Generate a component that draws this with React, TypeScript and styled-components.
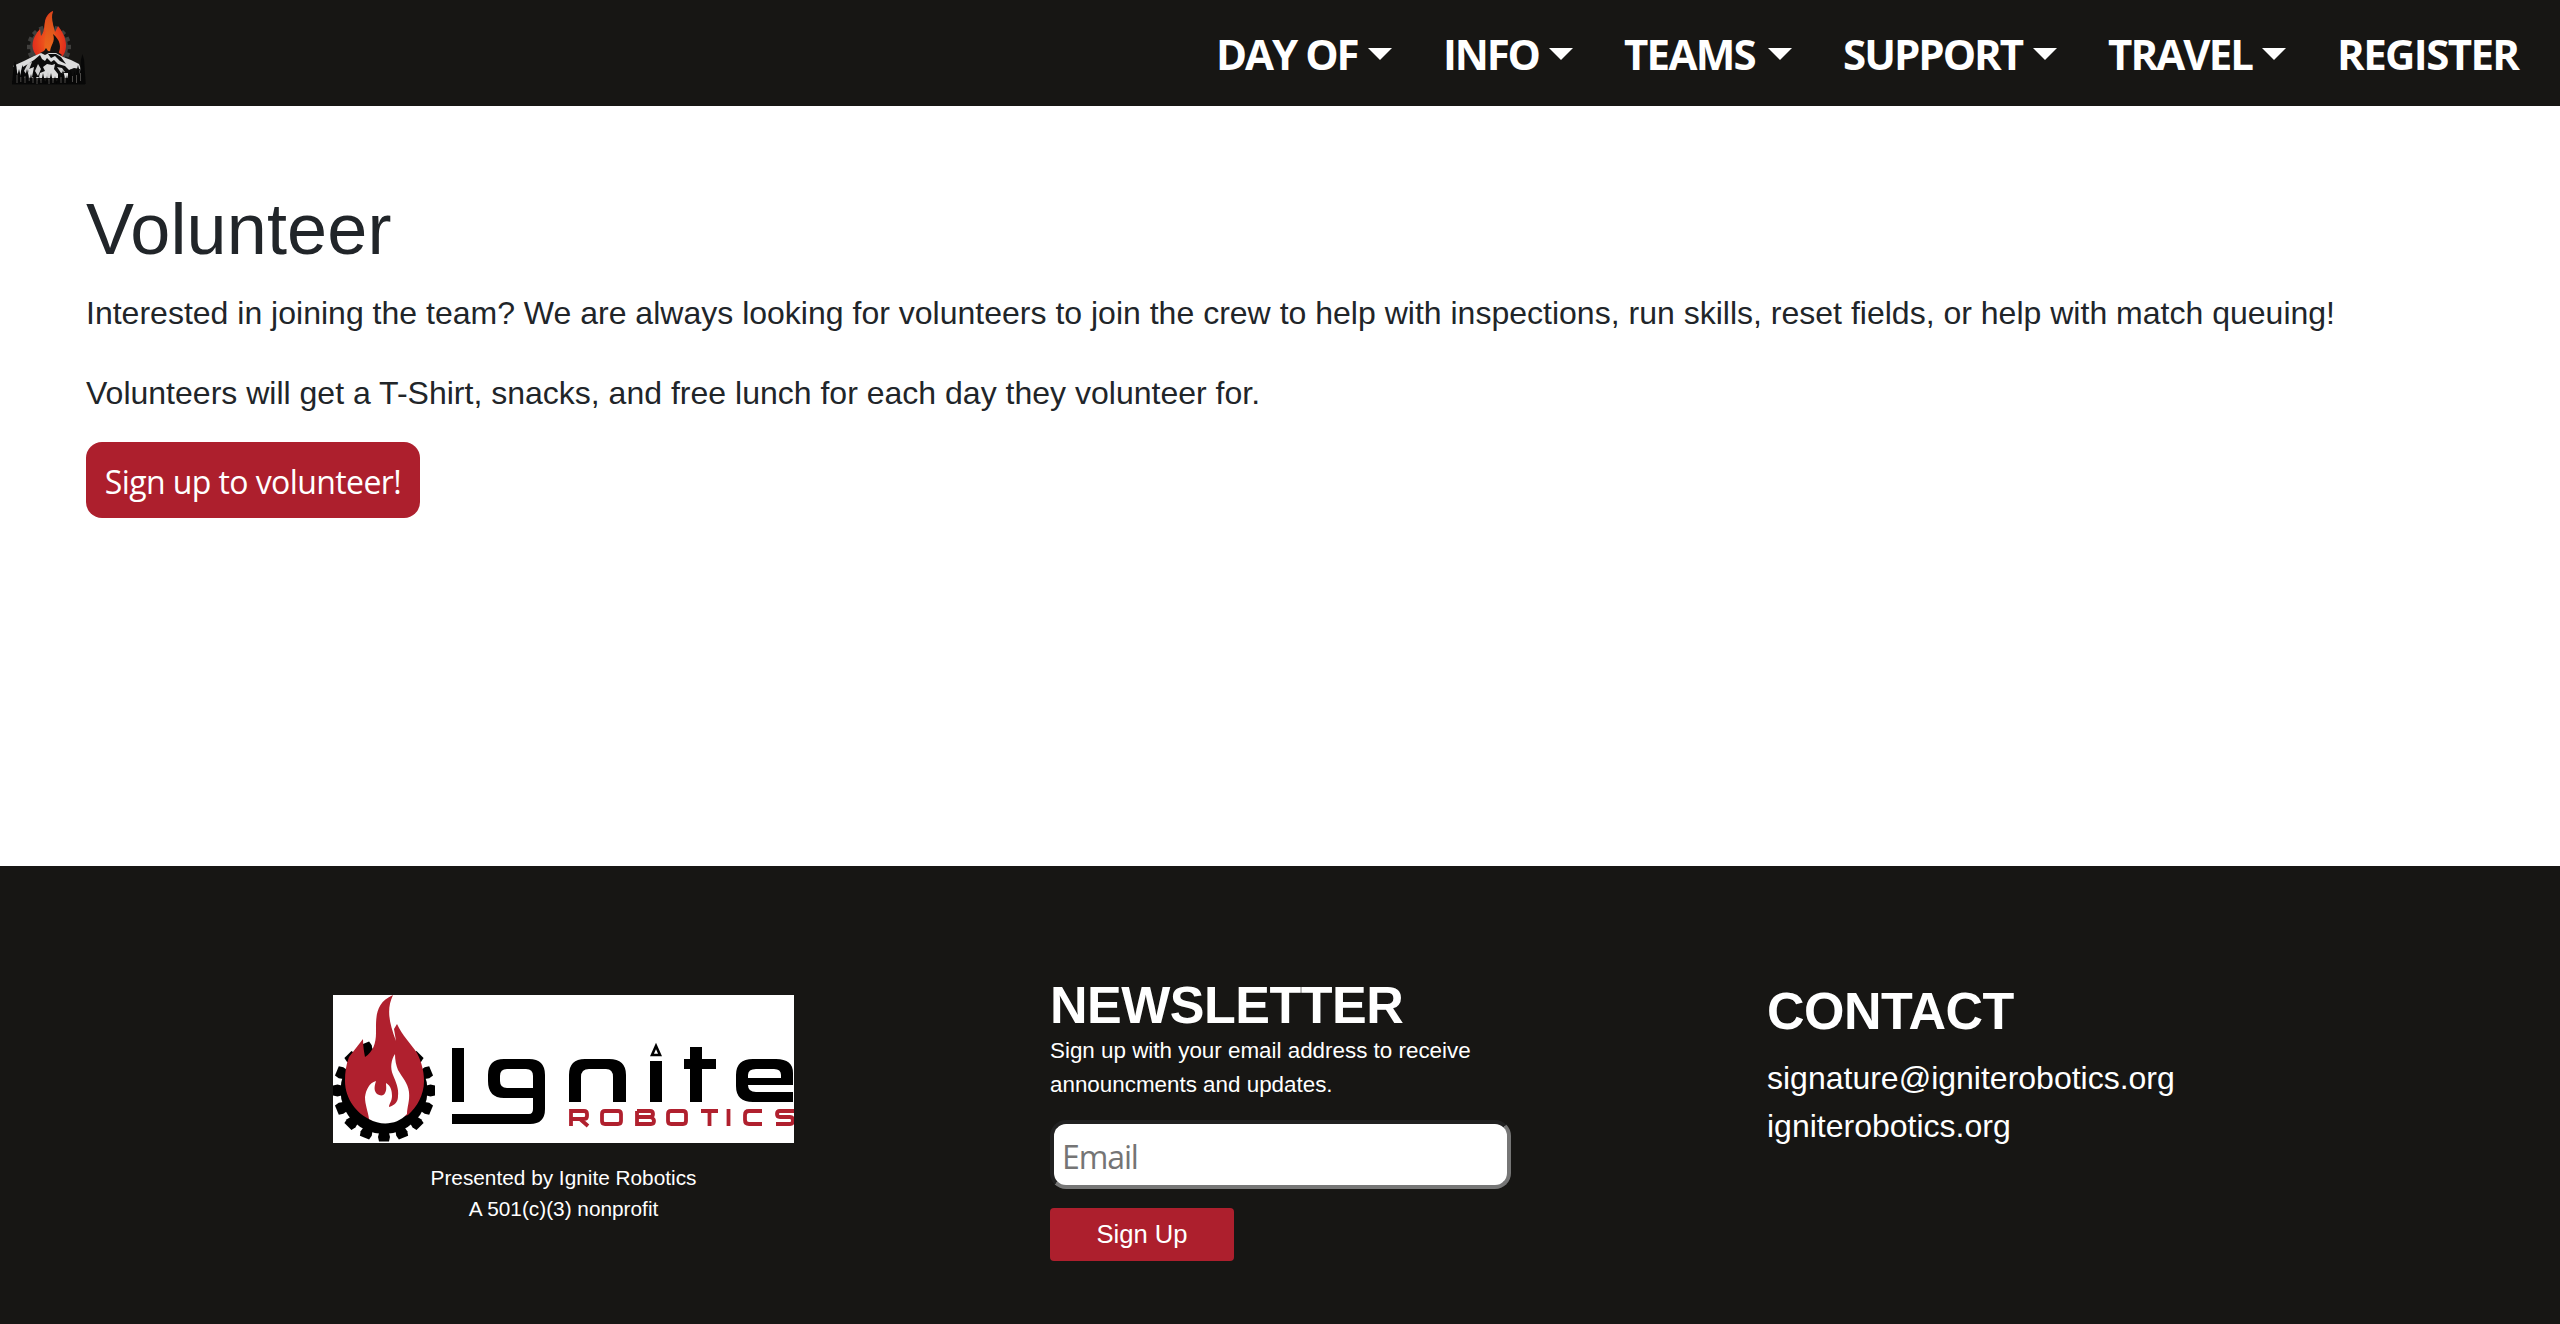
import React from "react";
import styled, { createGlobalStyle } from "styled-components";

const sans = `"Liberation Sans", Arial, sans-serif`;
const ui = `"Open Sans", "Noto Sans", sans-serif`;

const GlobalStyle = createGlobalStyle`
  *, *::before, *::after { box-sizing: border-box; }
  body { margin: 0; background: #fff; color: #212529; font-family: ${sans}; }
  h1, h2, p { margin: 0; }
`;

const Page = styled.div`
  display: flex;
  flex-direction: column;
  height: 1324px;
  overflow: hidden;
`;

const Header = styled.header`
  display: flex;
  justify-content: space-between;
  height: 106px;
  flex: none;
  background: #171614;
  padding: 0 40px 0 12px;
`;

const Brand = styled.a`
  display: block;
  width: 74px;
  padding-top: 11px;
  svg { display: block; }
`;

const Nav = styled.nav`
  display: flex;
  align-items: center;
`;

const NavItem = styled.a<{ $w: number; $ls: number }>`
  display: flex;
  align-items: center;
  width: ${(p) => p.$w}px;
  color: #fff;
  font: 700 42px/60px ${ui};
  letter-spacing: ${(p) => p.$ls}px;
  white-space: nowrap;
  padding-top: 2px;
`;

const Label = styled.span<{ $w: number }>`
  width: ${(p) => p.$w}px;
`;

const Caret = styled.span`
  border-top: 12px solid #fff;
  border-left: 12px solid transparent;
  border-right: 12px solid transparent;
`;

const Main = styled.main`
  height: 760px;
  flex: none;
  padding: 77px 86px 0;
`;

const Title = styled.h1`
  font-size: 72px;
  font-weight: 400;
  line-height: 92px;
  letter-spacing: 0.15px;
`;

const Lead = styled.p`
  font-size: 32px;
  line-height: 40px;
  padding-top: 18px;
  height: 167px;
  letter-spacing: 0.008px;
  white-space: nowrap;
`;

const Volunteer = styled.a`
  display: flex;
  justify-content: center;
  width: 334px;
  height: 76px;
  border-radius: 16px;
  background: #ad1f2d;
  color: #fff;
  font: 400 32px/80px ${ui};
  letter-spacing: -0.6px;
  white-space: nowrap;
`;

const Footer = styled.footer`
  display: flex;
  flex: 1;
  background: #171614;
  color: #fff;
  padding-left: 333px;
`;

const Sponsor = styled.section`
  width: 461px;
  margin-right: 256px;
  padding-top: 129px;
  text-align: center;
  font-size: 20.8px;
  line-height: 31px;
  svg { display: block; margin-bottom: 19px; }
`;

const Newsletter = styled.section`
  width: 462px;
  margin-right: 255px;
  padding-top: 109px;
`;

const Heading = styled.h2`
  font-size: 52px;
  font-weight: 700;
  line-height: 60px;
  letter-spacing: -0.5px;
  white-space: nowrap;
`;

const Blurb = styled.p`
  font-size: 22.4px;
  line-height: 34px;
  height: 86px;
  margin-top: -1px;
`;

const Email = styled.input`
  display: block;
  width: 461px;
  height: 69px;
  border: 4px solid;
  border-color: #212121 #767676 #767676 #212121;
  border-radius: 16px;
  background: #fff;
  padding: 4px 8px 0;
  font: 400 32px ${ui};
  letter-spacing: -1.1px;
  &::placeholder { color: #757575; opacity: 1; }
`;

const SignUp = styled.button`
  display: block;
  width: 184px;
  height: 53px;
  margin-top: 19px;
  padding: 0;
  border: 0;
  border-radius: 4px;
  background: #ad1f2d;
  color: #fff;
  font: 400 25.6px ${sans};
`;

const Contact = styled.section`
  padding-top: 115px;
`;

const ContactLink = styled.a`
  display: block;
  font-size: 32px;
  line-height: 48px;
`;

const ContactLinks = styled.div`
  padding-top: 13px;
`;

const items = [
  { text: "DAY OF", w: 227, label: 152, ls: -2, caret: true },
  { text: "INFO", w: 181, label: 106, ls: -2.2, caret: true },
  { text: "TEAMS", w: 219, label: 144, ls: -1.7, caret: true },
  { text: "SUPPORT", w: 265, label: 190, ls: -2, caret: true },
  { text: "TRAVEL", w: 229, label: 154, ls: -1.9, caret: true },
  { text: "REGISTER", w: 183, label: 183, ls: -1.6, caret: false },
];

const ring = (n: number) => Array.from({ length: n }, (_, i) => (i * 360) / n);

// Each tree is [centre x, top y, half width at the ground].
const trees = [
  [3, 50, 3], [7, 58, 3], [10.5, 54, 3], [15, 58, 3], [19, 63, 2.5], [22.5, 59, 3],
  [27, 65, 2.5], [31, 62, 2.5], [35, 65, 2.5], [39, 62, 2.5], [43, 65, 2.5], [47, 62, 2.5],
  [51, 59, 3], [55, 64, 2.5], [58.5, 58, 3], [62.5, 60, 2.5], [66, 54, 3], [70.5, 43, 3.2],
];

const CampLogo = () => (
  <svg width="74" height="74" viewBox="0 0 74 74">
    <defs>
      <radialGradient id="fire" cx="0.5" cy="0.65" r="0.6">
        <stop offset="0" stopColor="#f0641c" />
        <stop offset="0.55" stopColor="#e8401c" />
        <stop offset="1" stopColor="#dc221e" />
      </radialGradient>
      <linearGradient id="tongue" x1="0" y1="0" x2="0" y2="1">
        <stop offset="0" stopColor="#d9481a" />
        <stop offset="1" stopColor="#ee6a1c" />
      </linearGradient>
    </defs>
    <g fill="#403f3d">
      <circle cx="37" cy="36" r="19" />
      {ring(16).map((a) => (
        <rect key={a} x="34.800" y="14" width="4.400" height="6" transform={`rotate(${a} 37 36)`} />
      ))}
    </g>
    <path d="M24 44C18 36 20 27 28 18L29 25C34 19 31 11 35 5C37 2 39 1 41 0C38 8 41 14 43 21L46 15C50 20 54 27 54 34C54 40 52 44 49 47H28Z" fill="url(#fire)" />
    <path d="M33 42C31 33 35 25 33 18C32 10 35 3 41 0C38 8 43 17 43 25C43 33 38 34 38 42Z" fill="url(#tongue)" />
    <path d="M38 42C38 34 44 31 41 23C48 29 50 36 46 43Z" fill="#15110f" />
    <path d="M28 42L32 40L34 37L36 40L46 41L50 44L47 47H28Z" fill="#15110f" />
    <path d="M1 55L12 50L20 46L29 42L33 44L37 42L44 42L51 46L59 49L67 53L69 58L66 67H7L4 58Z" fill="#dcdcdc" />
    <path d="M28 44L22 49L16 53L11 56L8 66L15 66L17 58L22 56L20 66H27L28 62L33 60L31 56L35 53L40 54L43 53L42 58L46 63V67H50V62L56 62V67H66L68 58L62 57L57 59L53 55L46 53L42 49L39 51L35 47L33 50L30 48ZM36 43L39 47L43 45L48 50L54 53L49 46L44 43Z" fill="#0d0d0d" />
    <path d="M12 60L16 52L20 51L15 64ZM45 56L50 57L53 61L49 62ZM23 60L26 53L29 58L26 65ZM33 67L36 61L39 67Z" fill="#cfcfcf" />
    <rect x="0" y="70" width="73" height="3.500" fill="#090909" />
    {trees.map(([x, y, w]) => (
      <path key={x} d={`M${x - w} 73L${x - w * 0.5} ${y + 6}L${x} ${y}L${x + w * 0.5} ${y + 6}L${x + w} 73Z`} fill="#070707" />
    ))}
    <path d="M5 64V72M8.800 66V71M13 65V72M17.200 66V70M21 66V72M25 67V73M29 68V72M37 68V73M41 67V72M49 66V72M53 66V72M60.500 65V71M64.500 64V72M68.500 62V70" stroke="#6c6966" strokeWidth=".7" />
  </svg>
);

const IgniteLogo = () => (
  <svg width="461" height="148" viewBox="0 0 461 148">
    <rect width="461" height="148" fill="#fff" />
    <circle cx="51" cy="95.500" r="43.500" />
    {ring(16).map((a) => (
      <path key={a} d="M45 142L46.500 136H55.500L57 142L56 146.500H46Z" transform={`rotate(${a} 51 95.5)`} />
    ))}
    <path d="M38 125C24 119 12 104 12 86C12 77 13 70 16 62L30 44C30 51 31 57 32 62C40 57 43 48 43 38C43 22 42 8 60 0C54 13 55 25 63 46L61 34L64 29C69 40 78 49 84 58C88 66 91 75 91 86C91 100 84 112 75 120L51 128Z" fill="#b0202e" />
    <path d="M36 124C35 116 32 110 32 102C33 95 36 88 43 86C41 92 41 96 44 99C47 101 51 101 52 98C54 95 53 91 53 88C58 91 59 96 59 101C59 106 56 109 56 112C62 110 65 107 65 101C66 94 63 87 60 80C57 73 58 65 62 59C62 65 63 70 65 75C69 82 75 88 76 97C77 106 74 112 74 119C64 130 48 131 36 124Z" fill="#fff" />
    <path d="M119 53H131V107H119ZM119 119H196Q200 119 200 114V103H171Q155 103 155 86V80Q155 64 171 64H196Q212 64 212 80V114Q212 129 197 129H119ZM174 74Q167 74 167 81V86Q167 93 174 93H200V81Q200 74 193 74ZM236 107V80Q236 64 252 64H276Q293 64 293 80V107H280V82Q280 74 273 74H256Q248 74 248 82V107ZM317 66H329V107H317ZM357 52H369V64H383V74H369V107H357V74H351V64H357ZM403 80Q403 64 420 64H443Q460 64 460 78V90H415Q415 97 423 97H460V107H420Q403 107 403 91ZM415 83H448V80Q448 74 441 74H423Q415 74 415 80Z" fillRule="evenodd" />
    <path d="M319 60L323 51L327 60Z" fill="#fff" stroke="#000" strokeWidth="2.600" />
    <g fill="none" stroke="#b0202e" strokeWidth="3.8">
      <path d="M238 131V116H251Q254 116 254 119V121Q254 124 251 124H239M247 124L255 131M272 116H285Q288 116 288 119V126Q288 129 285 129H272Q269 129 269 126V119Q269 116 272 116ZM304 116H317Q320 116 320 119T317 122H305M317 122Q321 123 321 126T318 129H304V116M338 116H350Q353 116 353 119V126Q353 129 350 129H338Q335 129 335 126V119Q335 116 338 116ZM368 116H385M376.500 116V131M395.500 114V131M429 116H416Q412 116 412 120V125Q412 129 416 129H429M461 116H447Q444 116 444 119T447 122H457Q460 122 460 125.500T457 129H443" />
    </g>
  </svg>
);

export default function App() {
  return (
    <Page>
      <GlobalStyle />
      <Header>
        <Brand><CampLogo /></Brand>
        <Nav>
          {items.map((i) => (
            <NavItem key={i.text} $w={i.w} $ls={i.ls}>
              <Label $w={i.label}>{i.text}</Label>
              {i.caret && <Caret />}
            </NavItem>
          ))}
        </Nav>
      </Header>
      <Main>
        <Title>Volunteer</Title>
        <Lead>
          Interested in joining the team? We are always looking for volunteers to join the crew to help with inspections, run skills, reset fields, or help with match queuing!
          <br />
          <br />
          Volunteers will get a T-Shirt, snacks, and free lunch for each day they volunteer for.
        </Lead>
        <Volunteer>Sign up to volunteer!</Volunteer>
      </Main>
      <Footer>
        <Sponsor>
          <IgniteLogo />
          <p>Presented by Ignite Robotics</p>
          <p>A 501(c)(3) nonprofit</p>
        </Sponsor>
        <Newsletter>
          <Heading>NEWSLETTER</Heading>
          <Blurb>Sign up with your email address to receive announcments and updates.</Blurb>
          <Email placeholder="Email" />
          <SignUp>Sign Up</SignUp>
        </Newsletter>
        <Contact>
          <Heading>CONTACT</Heading>
          <ContactLinks>
            <ContactLink>signature@igniterobotics.org</ContactLink>
            <ContactLink>igniterobotics.org</ContactLink>
          </ContactLinks>
        </Contact>
      </Footer>
    </Page>
  );
}
